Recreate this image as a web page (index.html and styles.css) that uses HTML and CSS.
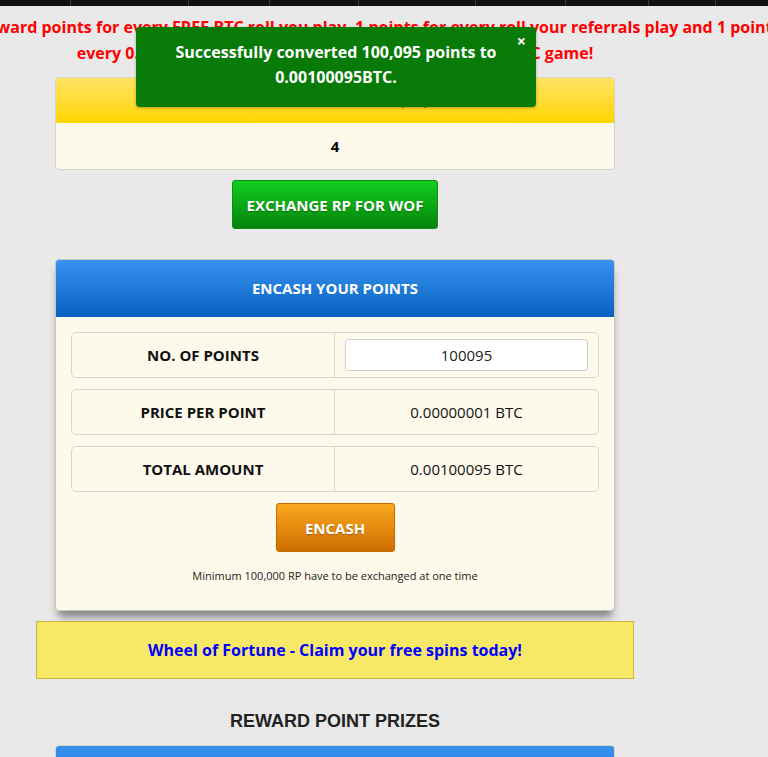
FILE: index.html
```html
<!DOCTYPE html>
<html lang="en">
<head>
    <meta charset="UTF-8">
    <meta name="viewport" content="width=device-width, initial-scale=1.0">
    <title>Reward Points</title>
    <link rel="stylesheet" href="styles.css">
</head>
<body>
    <!-- Top navigation strip -->
    <div class="topnav">
        <span class="nav-item w71"></span>
        <span class="nav-item w118"></span>
        <span class="nav-item w81"></span>
        <span class="nav-item w89"></span>
        <span class="nav-item w117"></span>
        <span class="nav-item w90"></span>
        <span class="nav-item w83"></span>
        <span class="nav-item w67"></span>
    </div>

    <div class="main">
        <div class="notice">
            <div class="notice-line">You will get 2 reward points for every FREE BTC roll you play, 1 points for every roll your referrals play and 1 point for</div>
            <div class="notice-line">every 0.00000100 BTC that you wager in the MULTIPLY BTC game!</div>
        </div>

        <!-- Spins card -->
        <div class="card">
            <div class="card-head yellow">YOUR WOF BALANCE (RP)</div>
            <div class="card-value">4</div>
        </div>

        <div class="center">
            <button class="btn btn-green">EXCHANGE RP FOR WOF</button>
        </div>

        <!-- Encash card -->
        <div class="card encash">
            <div class="card-head blue">ENCASH YOUR POINTS</div>
            <div class="card-body">
                <div class="row">
                    <div class="cell label">NO. OF POINTS</div>
                    <div class="cell"><input class="points-input" type="text" value="100095"></div>
                </div>
                <div class="row">
                    <div class="cell label">PRICE PER POINT</div>
                    <div class="cell">0.00000001 BTC</div>
                </div>
                <div class="row">
                    <div class="cell label">TOTAL AMOUNT</div>
                    <div class="cell">0.00100095 BTC</div>
                </div>
                <div class="center">
                    <button class="btn btn-orange">ENCASH</button>
                </div>
                <p class="small-note">Minimum 100,000 RP have to be exchanged at one time</p>
            </div>
        </div>

        <div class="banner">Wheel of Fortune - Claim your free spins today!</div>

        <h3 class="section-title">REWARD POINT PRIZES</h3>

        <div class="card">
            <div class="card-head blue">REWARD POINT PRIZES</div>
        </div>
    </div>

    <!-- Success message -->
    <div class="toast">
        <span class="toast-close">&times;</span>
        Successfully converted 100,095 points to<br>0.00100095BTC.
    </div>
</body>
</html>
```

FILE: styles.css
```css
body {
    margin: 0;
    font-family: "Open Sans", Arial, sans-serif;
    background-color: #e9e9e9;
    overflow: hidden;
}
.topnav {
    height: 6px;
    background-color: #111;
    display: flex;
}
.nav-item {
    border-right: 1px solid #3a3a3a;
}
.w71 { width: 70px; }
.w118 { width: 117px; }
.w81 { width: 80px; }
.w89 { width: 88px; }
.w117 { width: 116px; }
.w90 { width: 89px; }
.w83 { width: 82px; }
.w67 { width: 66px; }
.main {
    width: 670px;
    display: flex;
    flex-direction: column;
    align-items: center;
}
.notice {
    margin-top: 8px;
    width: 100%;
    display: flex;
    flex-direction: column;
    align-items: center;
    color: #ff0000;
    font-weight: bold;
    font-size: 16px;
    line-height: 26px;
}
.notice-line {
    white-space: nowrap;
    display: flex;
    justify-content: center;
    width: 100%;
}
.card {
    width: 558px;
    margin-top: 11px;
    border: 1px solid #d6d3c4;
    border-radius: 4px;
    background-color: #fdfaeb;
    overflow: hidden;
}
.card-head {
    text-align: center;
    font-weight: bold;
    font-size: 15px;
    color: #fff;
}
.card-head.yellow {
    height: 45px;
    line-height: 43px;
    color: #222;
    background: linear-gradient(#ffe466, #ffd500);
}
.card-head.blue {
    height: 57px;
    line-height: 56px;
    background: linear-gradient(#3893f0, #0560bf);
}
.card-value {
    height: 46px;
    line-height: 46px;
    text-align: center;
    font-weight: bold;
    font-size: 15px;
    color: #000;
}
.center {
    display: flex;
    justify-content: center;
}
.btn {
    font-family: "Open Sans", Arial, sans-serif;
    font-weight: bold;
    font-size: 15px;
    color: #fff;
    height: 49px;
    border-radius: 3px;
    cursor: pointer;
    text-shadow: 0 1px 1px rgba(0, 0, 0, 0.25);
}
.btn-green {
    margin-top: 10px;
    width: 206px;
    border: 1px solid #0b8f12;
    background: linear-gradient(#13cd1d, #06830d);
}
.btn-orange {
    width: 119px;
    border: 1px solid #c46800;
    background: linear-gradient(#fba81f, #cd6e00);
}
.encash {
    margin-top: 30px;
    border-color: #c9c6b8;
    box-shadow: 0 9px 8px -3px rgba(0, 0, 0, 0.45);
}
.card-body {
    padding: 15px 15px 0;
}
.row {
    display: flex;
    height: 44px;
    border: 1px solid #d8d5c8;
    border-radius: 5px;
    margin-bottom: 11px;
    font-size: 15px;
    color: #111;
}
.cell {
    flex: 0 0 50%;
    box-sizing: border-box;
    min-width: 0;
    display: flex;
    align-items: center;
    justify-content: center;
}
.cell.label {
    font-weight: bold;
    border-right: 1px solid #d8d5c8;
}
.cell:not(.label) {
    padding: 0 10px;
}
.points-input {
    width: 100%;
    height: 32px;
    box-sizing: border-box;
    border: 1px solid #cfcfcf;
    border-radius: 3px;
    text-align: center;
    font-family: "Open Sans", Arial, sans-serif;
    font-size: 15px;
    color: #222;
    background-color: #fff;
}
.small-note {
    margin: 16px 0 27px;
    text-align: center;
    font-size: 11px;
    color: #222;
}
.banner {
    margin-top: 10px;
    width: 596px;
    height: 56px;
    line-height: 56px;
    border: 1px solid #c7b83d;
    background-color: #f7e967;
    text-align: center;
    color: #0000ff;
    font-weight: bold;
    font-size: 16px;
}
.section-title {
    margin: 32px 0 0;
    font-family: "Liberation Sans", Arial, sans-serif;
    font-size: 18px;
    color: #222;
    line-height: 20px;
}
.section-title + .card {
    margin-top: 14px;
}
.toast {
    position: absolute;
    left: 136px;
    top: 27px;
    width: 400px;
    height: 80px;
    box-sizing: border-box;
    padding: 13px 20px 0;
    background-color: #077a07;
    border-radius: 4px;
    box-shadow: 0 1px 3px rgba(0, 0, 0, 0.3);
    color: #fff;
    font-weight: bold;
    font-size: 16px;
    line-height: 25px;
    text-align: center;
}
.toast-close {
    position: absolute;
    right: 10px;
    top: 2px;
    font-size: 16px;
}
```
